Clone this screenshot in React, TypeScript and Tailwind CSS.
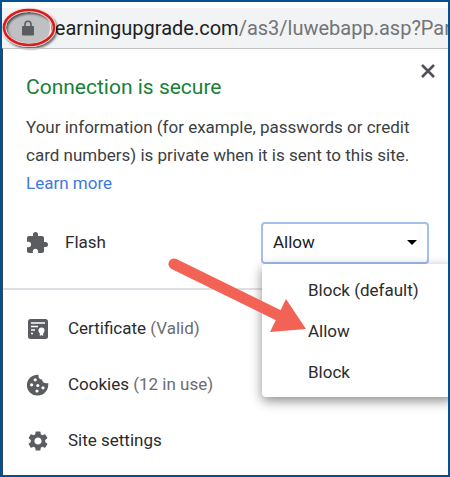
import type { ReactNode } from "react";
import { MdExtension, MdSettings } from "react-icons/md";

const options = ["Block (default)", "Allow", "Block"];

function LockIcon() {
  return (
    <svg viewBox="0 0 12 16" className="h-4 w-3" role="img" aria-label="Secure">
      <path d="M3 7V4.200a3 3 0 0 1 6 0V7" fill="none" stroke="#5a5c60" strokeWidth="1.600" />
      <rect x="0" y="6" width="12" height="9.500" rx="0.800" fill="#5a5c60" />
    </svg>
  );
}

function CertificateIcon() {
  return (
    <svg viewBox="0 0 20 20" className="size-5" aria-hidden="true">
      <rect x="0" y="0" width="20" height="20" rx="2.5" fill="#5a5c60" />
      <path d="M3 4h14M3 7.500h7M3 11h4M3 14.500h2" stroke="#fff" strokeWidth="1.500" />
      <circle cx="13.500" cy="11.500" r="3" fill="#fff" />
      <path d="M11.800 13v4l1.700-1 1.700 1V13z" fill="#fff" />
    </svg>
  );
}

function CookieIcon() {
  return (
    <svg viewBox="0 0 22 22" className="size-[22px]" aria-hidden="true">
      <path
        d="M11.500 0.800C11 3.500 12.500 5.500 15 5.500C15.200 8 17.500 9.800 21.200 9C22 16 17 21.500 11 21.500A10.400 10.400 0 1 1 11.500 0.800Z"
        fill="#5a5c60"
      />
      <g fill="#fff">
        <circle cx="8.200" cy="5.800" r="1.600" />
        <circle cx="4.600" cy="10.800" r="1.600" />
        <circle cx="10.800" cy="11.500" r="1.600" />
        <circle cx="16" cy="13.800" r="1.600" />
        <circle cx="10" cy="17" r="1.600" />
      </g>
    </svg>
  );
}

function InfoRow({ icon, label, note }: { icon: ReactNode; label: string; note?: string }) {
  return (
    <li>
      <button type="button" className="flex h-14 w-full items-center gap-[18px] pl-[23px] text-left">
        <span className="flex size-6 items-center justify-center text-[#5a5c60]">{icon}</span>
        <span>
          {label}
          {note && <span className="text-[#6b6d70]"> {note}</span>}
        </span>
      </button>
    </li>
  );
}

function HighlightRing() {
  return (
    <svg
      viewBox="0 0 60 52"
      className="pointer-events-none absolute left-0 -top-1.5 h-[52px] w-[60px]"
      aria-hidden="true"
    >
      <defs>
        <filter id="ring-shadow" x="-20%" y="-20%" width="150%" height="150%">
          <feDropShadow dx="1.500" dy="2" stdDeviation="1.200" floodColor="#000" floodOpacity="0.6" />
        </filter>
      </defs>
      <g fill="none" filter="url(#ring-shadow)">
        <ellipse cx="27" cy="25.500" rx="25" ry="17.500" stroke="#f3dcdc" strokeWidth="4" />
        <ellipse cx="27" cy="25.500" rx="25" ry="17.500" stroke="#d91f1f" strokeWidth="2.600" />
      </g>
    </svg>
  );
}

function PointerArrow() {
  return (
    <svg
      viewBox="0 0 140 80"
      className="pointer-events-none absolute -left-24 -top-2 z-20 h-20 w-[140px]"
      aria-hidden="true"
    >
      <path d="M8 8L116 61" stroke="#f26355" strokeWidth="11" strokeLinecap="round" />
      <path d="M120 43L140 73L104 76Z" fill="#f26355" />
    </svg>
  );
}

export default function App() {
  return (
    <div className="flex h-screen flex-col overflow-hidden border-2 border-[#045091] bg-white pt-1.5 font-['Roboto',sans-serif] text-[17px] text-[#2b2c2e]">
      <header className="relative flex h-10 shrink-0 items-center bg-[#f1f3f4]">
        <span className="ml-1 flex h-8 w-11 shrink-0 items-center justify-center rounded-full bg-[#bfc0c2]">
          <LockIcon />
        </span>
        <span className="whitespace-nowrap text-xl text-[#727477]">
          <span className="text-[#202124]">learningupgrade.com</span>/as3/luwebapp.asp?Par
        </span>
        <HighlightRing />
      </header>

      <main className="relative flex-1 border-l border-t border-l-[#33485c] border-t-[#bfc1c3]">
        <div className="flex justify-between pl-[23px] pr-3 pt-3">
          <h1 className="pt-3 text-[21px] leading-7 text-[#188038]">Connection is secure</h1>
          <button type="button" aria-label="Close" className="size-4 text-[#505258]">
            <svg viewBox="0 0 16 16" className="mt-0.5 size-4">
              <path d="M2 2l12 12M14 2L2 14" stroke="currentColor" strokeWidth="2.600" />
            </svg>
          </button>
        </div>
        <p className="pl-[23px] pr-7 pt-3 leading-7 text-[#3c4043]">
          Your information (for example, passwords or credit card numbers) is private when it is
          sent to this site.{" "}
          <a href="#learn" className="block text-[#3b7ae0]">
            Learn more
          </a>
        </p>

        <div className="mt-[25px] flex items-center pl-[22px] pr-[19px]">
          <MdExtension className="size-6 text-[#5a5c60]" aria-hidden="true" />
          <label htmlFor="flash" className="flex-1 pl-4">
            Flash
          </label>
          <div className="relative">
            <select
              id="flash"
              defaultValue="Allow"
              className="block h-[42px] w-[168px] appearance-none rounded border-2 border-[#a3bfec] bg-white pl-2.5 text-[#202124] outline-none"
            >
              {options.map((option) => (
                <option key={option}>{option}</option>
              ))}
            </select>
            <span className="pointer-events-none absolute right-3 top-[18px] border-x-[5px] border-t-[5px] border-x-transparent border-t-black" />
            <div className="absolute left-px top-full z-10 w-48">
              <ul
                role="listbox"
                aria-label="Flash options"
                className="rounded-sm bg-white pb-1 pt-1.5 shadow-[0_4px_12px_rgba(0,0,0,0.45)]"
              >
                {options.map((option) => (
                  <li
                    key={option}
                    role="option"
                    aria-selected={option === "Allow"}
                    className="flex h-[41px] items-center pl-[46px]"
                  >
                    {option}
                  </li>
                ))}
              </ul>
              <PointerArrow />
            </div>
          </div>
        </div>

        <ul className="mt-6 border-t-2 border-[#dedfe5] pt-[11px]">
          <InfoRow icon={<CertificateIcon />} label="Certificate" note="(Valid)" />
          <InfoRow icon={<CookieIcon />} label="Cookies" note="(12 in use)" />
          <InfoRow icon={<MdSettings className="size-6" />} label="Site settings" />
        </ul>
      </main>
    </div>
  );
}
